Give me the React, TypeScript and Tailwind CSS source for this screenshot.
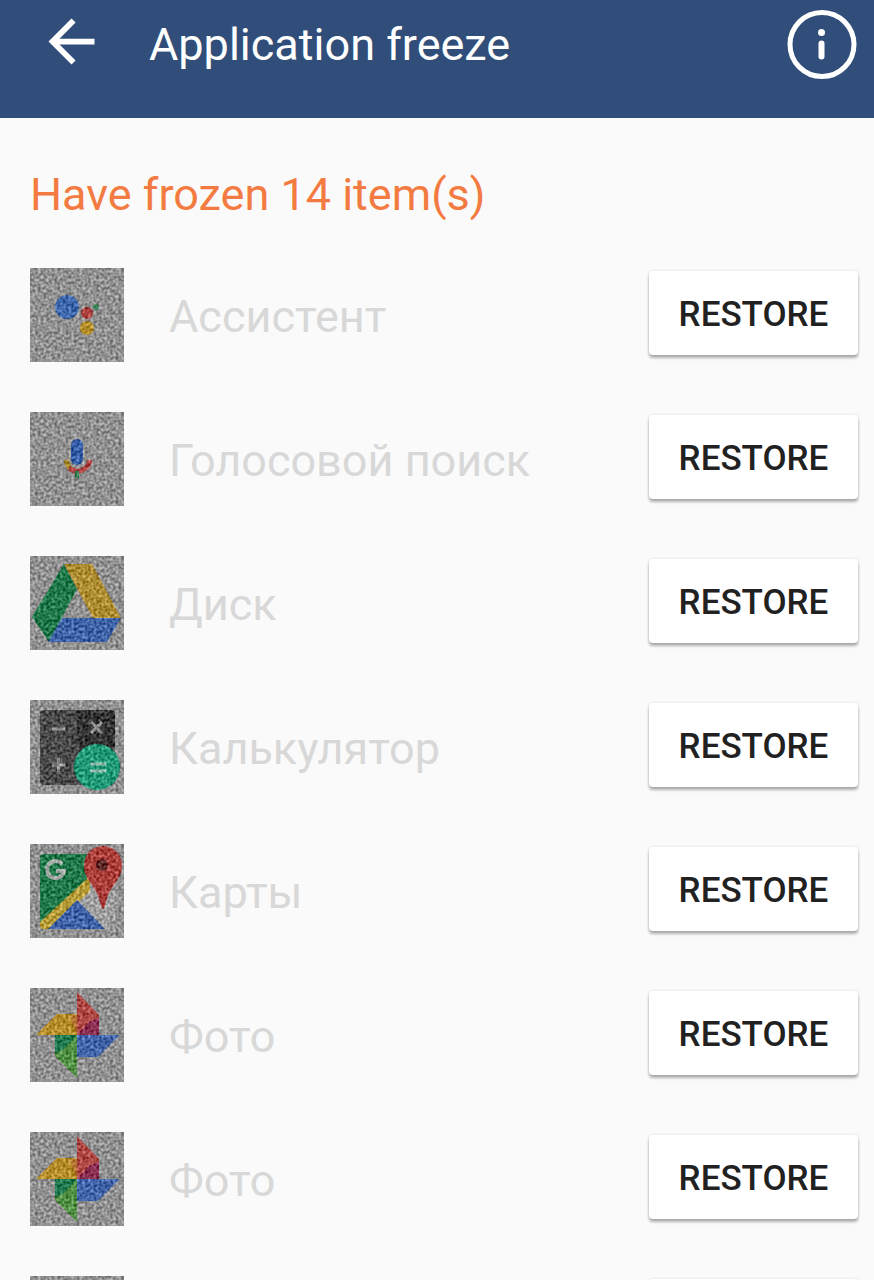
import React from 'react'

type IconName = 'assistant' | 'voice' | 'drive' | 'calculator' | 'maps' | 'photos' | 'blank'

const apps: { name: string; icon: IconName }[] = [
  { name: 'Ассистент', icon: 'assistant' },
  { name: 'Голосовой поиск', icon: 'voice' },
  { name: 'Диск', icon: 'drive' },
  { name: 'Калькулятор', icon: 'calculator' },
  { name: 'Карты', icon: 'maps' },
  { name: 'Фото', icon: 'photos' },
  { name: 'Фото', icon: 'photos' },
  { name: '', icon: 'blank' },
]

// all shapes are drawn on a 94 x 94 grid
const drawings: Record<IconName, React.ReactNode> = {
  assistant: (
    <>
      <circle cx="37" cy="39" r="12" fill="#4069ad" />
      <circle cx="57" cy="45" r="6" fill="#ab4240" />
      <circle cx="57" cy="60" r="7" fill="#b38d2a" />
      <circle cx="66" cy="39" r="3" fill="#387f56" />
    </>
  ),
  voice: (
    <>
      <rect x="41" y="27" width="12" height="26" rx="6" fill="#3860a8" />
      <path d="M36 48q1 5 4 8" stroke="#a38529" strokeWidth="5" fill="none" />
      <path d="M39 56q8 6 15 1 5-3 6-9" stroke="#ab4240" strokeWidth="5" fill="none" />
      <path d="M45 59h4v7h-4z" fill="#317a4d" />
    </>
  ),
  drive: (
    <>
      <path d="M34 8 47 33 19 86 2 61z" fill="#20784b" />
      <path d="M34 8h28l29 54H63z" fill="#ae8c32" />
      <path d="M32 62h59L77 86H18z" fill="#3f63a7" />
    </>
  ),
  calculator: (
    <>
      <rect x="10" y="10" width="75" height="75" rx="4" fill="#4a4a4a" />
      <path d="M47 10h34q4 0 4 4v34H47z" fill="#343434" />
      <path d="M22 29h13M22 65h13M28.500 58v14M61 22l11 11M72 22l-11 11" stroke="#959595" strokeWidth="3" fill="none" />
      <circle cx="67" cy="67" r="23" fill="#229a78" />
      <path d="M60 64h16M60 71h16" stroke="#8ab5a7" strokeWidth="3" />
    </>
  ),
  maps: (
    <>
      <path d="M14 10h71v71q0 4-4 4H14q-4 0-4-4V14q0-4 4-4z" fill="#9f9f9f" />
      <path d="M14 10h50L64 28 10 80V14q0-4 4-4z" fill="#21784a" />
      <path d="M10 78 60 32v15L20 85h-6q-4 0-4-4z" fill="#b69c38" />
      <path d="M18 85 47 56l28 29z" fill="#3f63a6" />
      <path d="M32 20a8.500 8.500 0 1 0 2 7h-8" stroke="#a3aaa5" strokeWidth="4" fill="none" />
      <path d="M73 2a19 19 0 0 0-19 20c0 14 13 20 16 36 1 4 2 7 3 7s2-3 3-7c3-16 16-22 16-36A19 19 0 0 0 73 2z" fill="#a93e3b" />
      <circle cx="72" cy="21" r="6" fill="#61282a" />
    </>
  ),
  photos: (
    <>
      <path d="M47 4 69 27v20H47z" fill="#ad4743" />
      <path d="M47 47 60 33l9-3v17z" fill="#8b3053" />
      <path d="M6 47 27 26h20v21z" fill="#b68d2b" />
      <path d="M40 27h7v20z" fill="#b37432" />
      <path d="M25 47h22v43L25 68z" fill="#529045" />
      <path d="M25 47h22L34 61l-9 4z" fill="#227a50" />
      <path d="M47 47h43L68 69H47z" fill="#4264a9" />
    </>
  ),
  blank: null,
}

const AppIcon = ({ icon }: { icon: IconName }) => (
  <svg className="w-[94px] h-[94px] shrink-0" viewBox="0 0 94 94" aria-hidden="true">
    <g filter="url(#frost)">
      <rect width="94" height="94" fill="#919191" />
      {drawings[icon]}
    </g>
  </svg>
)

const AppRow = ({ name, icon }: { name: string; icon: IconName }) => (
  <li className="flex items-center h-[94px]">
    <AppIcon icon={icon} />
    <p className="flex-1 pt-1 pl-[45px] text-[45px] leading-[56px] text-[#d8d8d8]">{name}</p>
    <button
      type="button"
      className="w-[209px] h-[84px] mb-1 pt-1 rounded-[4px] bg-white text-[35px] leading-[44px] font-medium text-[#212121] shadow-[0_3px_3px_rgba(0,0,0,0.3),0_0_3px_rgba(0,0,0,0.12)]"
    >
      RESTORE
    </button>
  </li>
)

const App = () => {
  return (
    <div className="h-screen flex flex-col overflow-hidden bg-[#fafafa] font-[Roboto,sans-serif]">
      {/* grain laid over the icons of frozen apps */}
      <svg className="absolute w-0 h-0" aria-hidden="true">
        <filter id="frost" x="0" y="0" width="100%" height="100%" colorInterpolationFilters="sRGB">
          <feTurbulence type="fractalNoise" baseFrequency="0.36" numOctaves="1" seed="4" result="noise" />
          <feColorMatrix
            in="noise"
            type="matrix"
            values="1 0 0 0 0  1 0 0 0 0  1 0 0 0 0  0 0 0 0 1"
            result="gray"
          />
          <feComposite in="SourceGraphic" in2="gray" operator="arithmetic" k1="0" k2="1" k3="0.7" k4="-0.35" />
        </filter>
      </svg>

      <header className="h-[118px] shrink-0 flex items-center pl-[37px] pr-[17px] pb-7 bg-[#304e79] text-white">
        <button type="button" aria-label="Back" className="mb-2">
          <svg className="w-[69px] h-[69px]" viewBox="0 0 24 24" fill="currentColor">
            <path d="M20 11H7.830l5.590-5.590L12 4l-8 8 8 8 1.410-1.410L7.830 13H20v-2z" />
          </svg>
        </button>
        <h1 className="flex-1 pl-[43px] text-[45px] leading-[56px]">Application freeze</h1>
        <button type="button" aria-label="Info">
          <svg className="w-[70px] h-[70px]" viewBox="0 0 70 70" fill="none">
            <circle cx="35" cy="34.500" r="32" stroke="currentColor" strokeWidth="5" />
            <circle cx="34.500" cy="22.500" r="3.500" fill="currentColor" />
            <path d="M34.500 33.500v13" stroke="currentColor" strokeWidth="6" strokeLinecap="round" />
          </svg>
        </button>
      </header>

      <main className="flex-1 overflow-y-auto [scrollbar-width:none] pt-[49px] pl-[30px] pr-4">
        <h2 className="text-[45px] leading-[56px] text-[#f37b42]">Have frozen 14 item(s)</h2>
        <ul className="flex flex-col gap-[50px] pt-[45px]">
          {apps.map((app, i) => (
            <AppRow key={`${app.icon}${i}`} name={app.name} icon={app.icon} />
          ))}
        </ul>
      </main>
    </div>
  )
}

export default App
